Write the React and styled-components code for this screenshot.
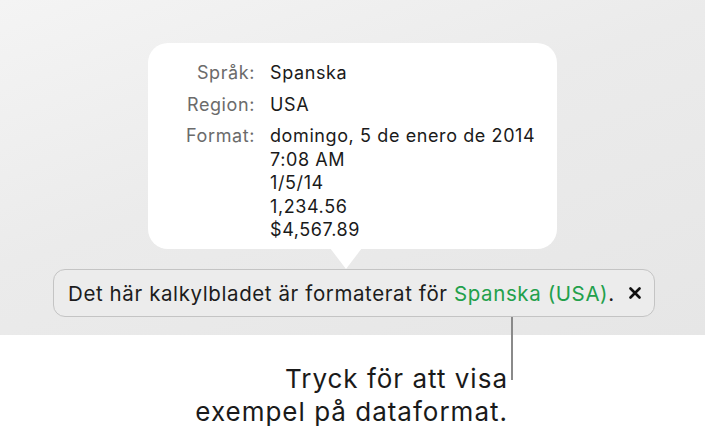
import React from "react";
import styled, { createGlobalStyle } from "styled-components";

const Global = createGlobalStyle`
  html, body { margin: 0; padding: 0; background: #ffffff; }
  body { font-family: Inter, "Liberation Sans", sans-serif; -webkit-font-smoothing: antialiased; }
`;

const Page = styled.div`
  width: 705px;
  height: 436px;
  display: flex;
  flex-direction: column;
  overflow: hidden;
`;

const Stage = styled.div`
  height: 335px;
  background: linear-gradient(160deg, #f4f4f4 0%, #ebebeb 45%, #e6e6e6 100%);
  display: flex;
  flex-direction: column;
  align-items: flex-start;
  padding-top: 43px;
  box-sizing: border-box;
`;

const Popover = styled.div`
  position: relative;
  margin-left: 148px;
  width: 409px;
  height: 206px;
  box-sizing: border-box;
  background: #ffffff;
  border-radius: 20px;
  padding: 18px 0 0 0;
  display: grid;
  grid-template-columns: 107px 1fr;
  column-gap: 15px;
  row-gap: 8px;
  align-content: start;
  &::after {
    content: "";
    position: absolute;
    left: 182px;
    bottom: -20px;
    border-left: 16px solid transparent;
    border-right: 16px solid transparent;
    border-top: 21px solid #ffffff;
  }
`;

const Label = styled.div`
  text-align: right;
  color: #6b6b6b;
  font-size: 18px;
  line-height: 23.5px;
  letter-spacing: 0.6px;
`;

const Value = styled.div`
  color: #1a1a1a;
  font-size: 18px;
  line-height: 23.5px;
  letter-spacing: 0.6px;
`;

const Banner = styled.div`
  margin-left: 53px;
  margin-top: 20px;
  width: 602px;
  height: 48px;
  box-sizing: border-box;
  border: 1px solid #c4c4c4;
  border-radius: 12px;
  background: #ececec;
  display: flex;
  align-items: center;
  padding-left: 14px;
  font-size: 20.5px;
  letter-spacing: 0.6px;
  color: #1c1c1c;
  position: relative;
  z-index: 1;
  white-space: nowrap;
`;

const Green = styled.span`
  color: #22a04b;
`;

const CloseIcon = styled.svg`
  margin-left: 14px;
  width: 12px;
  height: 12px;
  flex: none;
`;

const Caption = styled.div`
  position: relative;
  display: flex;
  justify-content: flex-end;
  width: 508px;
  padding-top: 27px;
`;

const CaptionText = styled.div`
  text-align: right;
  font-size: 26px;
  line-height: 33px;
  letter-spacing: 1px;
  color: #1a1a1a;
  white-space: nowrap;
`;

const Leader = styled.div`
  position: absolute;
  left: 511px;
  top: -18px;
  width: 2px;
  height: 63px;
  background: #8a8a8a;
`;

export default function App() {
  return (
    <Page>
      <Global />
      <Stage>
        <Popover>
          <Label>Språk:</Label>
          <Value>Spanska</Value>
          <Label>Region:</Label>
          <Value>USA</Value>
          <Label>Format:</Label>
          <Value>
            domingo, 5 de enero de 2014<br />
            7:08 AM<br />
            1/5/14<br />
            1,234.56<br />
            $4,567.89
          </Value>
        </Popover>
        <Banner>
          Det här kalkylbladet är formaterat för&nbsp;<Green>Spanska (USA)</Green>.
          <CloseIcon viewBox="0 0 12 12">
            <path d="M1.5 1.5 L10.5 10.5 M10.5 1.5 L1.5 10.5" stroke="#111" strokeWidth="2.6" strokeLinecap="round" />
          </CloseIcon>
        </Banner>
      </Stage>
      <Caption>
        <Leader />
        <CaptionText>
          Tryck för att visa<br />
          exempel på dataformat.
        </CaptionText>
      </Caption>
    </Page>
  );
}
